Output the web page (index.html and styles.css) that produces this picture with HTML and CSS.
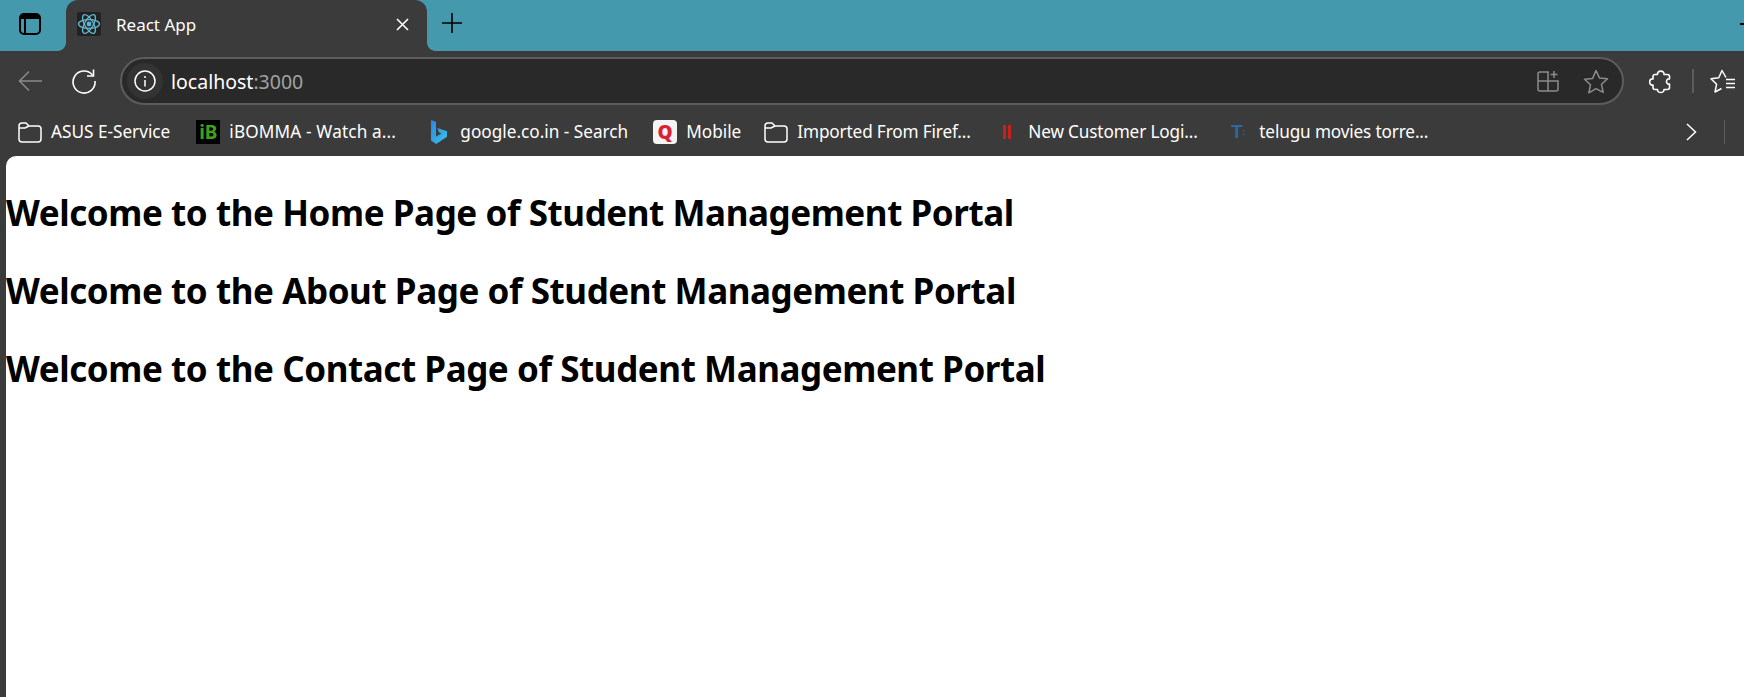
FILE: index.html
```html
<!DOCTYPE html>
<html lang="en">
<head>
  <meta charset="UTF-8">
  <title>React App</title>
  <link rel="stylesheet" href="styles.css">
</head>
<body>
  <div class="tabstrip">
    <div class="sidebar-btn">
      <svg width="22" height="22" viewBox="0 0 22 22" fill="none" stroke="#000" stroke-width="2"><rect x="1" y="1" width="20" height="20" rx="4"/><path d="M6 5v16"/><path d="M2 1.500h18V6H1z" fill="#000" stroke="none"/></svg>
    </div>
    <div class="tab">
      <span class="tab-icon">
        <svg width="24" height="24" viewBox="0 0 24 24" fill="none" stroke="#61b6cf" stroke-width="1.300"><circle cx="12" cy="12" r="2.400" fill="#61b6cf" stroke="none"/><ellipse cx="12" cy="12" rx="10.500" ry="4.300"/><ellipse cx="12" cy="12" rx="10.500" ry="4.300" transform="rotate(60 12 12)"/><ellipse cx="12" cy="12" rx="10.500" ry="4.300" transform="rotate(120 12 12)"/></svg>
      </span>
      <span class="tab-title">React App</span>
      <svg class="tab-close" width="13" height="13" viewBox="0 0 13 13" stroke="#fff" stroke-width="1.600"><path d="M1 1l11 11M12 1L1 12"/></svg>
    </div>
    <svg class="new-tab" width="20" height="20" viewBox="0 0 20 20" stroke="#000" stroke-width="1.600"><path d="M10 0v20M0 10h20"/></svg>
    <span class="minimize"></span>
  </div>

  <div class="toolbar">
    <svg class="back" width="24" height="22" viewBox="0 0 24 22" fill="none" stroke="#8a8a8a" stroke-width="1.500"><path d="M24 11H1.500M11 1.500L1.500 11l9.500 9.500"/></svg>
    <svg class="reload" width="26" height="26" viewBox="0 0 26 26" fill="none" stroke="#fff" stroke-width="1.600"><path d="M21.500 7A11 11 0 1 0 24 13"/><path d="M22.500 1.500V8H16"/></svg>
    <div class="addressbar">
      <span class="site-info">
        <svg width="22" height="22" viewBox="0 0 22 22" fill="none" stroke="#fff" stroke-width="1.500"><circle cx="11" cy="11" r="10"/><path d="M11 10v6.500M11 6v2"/></svg>
      </span>
      <span class="url">localhost<span class="url-port">:3000</span></span>
      <svg class="split-icon" width="22" height="22" viewBox="0 0 22 22" fill="none" stroke="#8c8c8c" stroke-width="1.500"><path d="M12 2H3a2 2 0 0 0-2 2v15a2 2 0 0 0 2 2h16a2 2 0 0 0 2-2v-8H1M11 2v19"/><path d="M17 1v7M13.500 4.500h7"/></svg>
      <svg class="star-icon" width="26" height="25" viewBox="0 0 26 25" fill="none" stroke="#8c8c8c" stroke-width="1.500" stroke-linejoin="round"><path d="M13 1.500l3.400 7.400 8.100.9-6 5.500 1.700 8L13 19.700l-7.200 4.100 1.700-8-6-5.500 8.100-.9z"/></svg>
    </div>
    <svg class="puzzle" width="24" height="25" viewBox="0 0 24 25" fill="none" stroke="#fff" stroke-width="1.600" stroke-linejoin="round"><path d="M8.500 5.500C8 1 15.500 1 15 5.500h3.500a2 2 0 0 1 2 2V10c-4-1-4 6 0 5v3.500a2 2 0 0 1-2 2H15c.5 4-7 4-6.500 0H6a2 2 0 0 1-2-2V16c-4.500 1-4.500-7 0-6V7.500a2 2 0 0 1 2-2z"/></svg>
    <span class="toolbar-sep"></span>
    <svg class="favorites" width="26" height="25" viewBox="0 0 26 25" fill="none" stroke="#fff" stroke-width="1.500" stroke-linejoin="round"><path d="M16 8.500L12 1.500 8.800 8.800 1 9.800l5.600 5.400L5 23l6.500-3.500"/><path d="M16 10.500h9M16 14.500h9M16 18.500h9"/></svg>
  </div>

  <div class="bookmarks">
    <a class="bookmark">
      <span class="bm-icon">
        <svg width="24" height="22" viewBox="0 0 24 22" fill="none" stroke="#fff" stroke-width="1.500"><path d="M1 5a3 3 0 0 1 3-3h4l3 3h9a3 3 0 0 1 3 3v10a3 3 0 0 1-3 3H4a3 3 0 0 1-3-3z"/><path d="M1 7h6l4-2"/></svg>
      </span>
      <span>ASUS E-Service</span>
    </a>
    <a class="bookmark bookmark-clip">
      <span class="bm-icon bm-ib">iB</span>
      <span class="bm-label-wide">iBOMMA - Watch a...</span>
    </a>
    <a class="bookmark bookmark-google">
      <span class="bm-icon">
        <svg width="16" height="24" viewBox="0 0 16 24"><defs><linearGradient id="bing" x1="0" y1="0" x2="1" y2="1"><stop offset="0" stop-color="#2a86e8"/><stop offset="1" stop-color="#3ac4e6"/></linearGradient></defs><path fill="url(#bing)" d="M0 0l5 1.800v14.700l5.500-3-2.600-1.300L6.300 8 16 11.300v5.500L5.200 24 0 20.500z"/></svg>
      </span>
      <span>google.co.in - Search</span>
    </a>
    <a class="bookmark bookmark-mobile">
      <span class="bm-icon bm-q">Q</span>
      <span>Mobile</span>
    </a>
    <a class="bookmark bookmark-clip">
      <span class="bm-icon">
        <svg width="24" height="22" viewBox="0 0 24 22" fill="none" stroke="#fff" stroke-width="1.500"><path d="M1 5a3 3 0 0 1 3-3h4l3 3h9a3 3 0 0 1 3 3v10a3 3 0 0 1-3 3H4a3 3 0 0 1-3-3z"/><path d="M1 7h6l4-2"/></svg>
      </span>
      <span class="bm-label-tight">Imported From Firef...</span>
    </a>
    <a class="bookmark bookmark-clip">
      <span class="bm-icon">
        <svg width="8" height="14" viewBox="0 0 8 14" fill="#c9201c"><rect width="3" height="14"/><rect x="5" width="3" height="14"/></svg>
      </span>
      <span class="bm-label-tight">New Customer Logi...</span>
    </a>
    <a class="bookmark bookmark-clip">
      <span class="bm-icon bm-t">T<small>:</small></span>
      <span class="bm-label-tight">telugu movies torre...</span>
    </a>
    <svg class="bm-more" width="11" height="18" viewBox="0 0 11 18" fill="none" stroke="#fff" stroke-width="1.500"><path d="M1 1l8.500 8L1 17"/></svg>
    <span class="bm-sep"></span>
  </div>

  <main class="page">
    <h1>Welcome to the Home Page of Student Management Portal</h1>
    <h1>Welcome to the About Page of Student Management Portal</h1>
    <h1>Welcome to the Contact Page of Student Management Portal</h1>
  </main>
</body>
</html>
```

FILE: styles.css
```css
html, body {
  margin: 0;
  height: 100%;
  overflow: hidden;
  background: #3b3b3b;
  font-family: "Noto Sans", sans-serif;
}
body {
  display: flex;
  flex-direction: column;
}
svg {
  display: block;
  flex: none;
}

/* tab strip */
.tabstrip {
  display: flex;
  align-items: center;
  height: 51px;
  background: #4599ad;
}
.sidebar-btn {
  width: 66px;
  padding: 0 0 3px 19px;
  box-sizing: border-box;
}
.tab {
  position: relative;
  display: flex;
  align-items: center;
  align-self: stretch;
  width: 361px;
  box-sizing: border-box;
  padding: 0 18px 3px 11px;
  background: #3b3b3b;
  border-radius: 12px 12px 0 0;
}
.tab::before, .tab::after {
  content: "";
  position: absolute;
  bottom: 0;
  width: 8px;
  height: 8px;
}
.tab::before {
  left: -8px;
  background: radial-gradient(circle at 0 0, transparent 7.500px, #3b3b3b 8px);
}
.tab::after {
  right: -8px;
  background: radial-gradient(circle at 100% 0, transparent 7.500px, #3b3b3b 8px);
}
.tab-icon {
  width: 24px;
  height: 24px;
  background: #222;
  border-radius: 2px;
}
.tab-title {
  flex: 1;
  margin-left: 15px;
  color: #fff;
  font-size: 17px;
}
.new-tab {
  margin: 0 0 5px 15px;
}
.minimize {
  width: 4px;
  height: 2px;
  margin: 0 0 3px auto;
  background: #000;
}

/* toolbar */
.toolbar {
  display: flex;
  align-items: center;
  height: 60px;
  padding-left: 18px;
}
.reload {
  margin-left: 29px;
}
.addressbar {
  display: flex;
  align-items: center;
  width: 1504px;
  height: 48px;
  box-sizing: border-box;
  margin-left: 23px;
  padding: 0 13px 0 5px;
  background: #292929;
  border: 2px solid #5c5c5c;
  border-radius: 24px;
}
.site-info {
  display: flex;
  align-items: center;
  justify-content: center;
  width: 36px;
  height: 36px;
  background: #333;
  border-radius: 50%;
}
.url {
  flex: 1;
  margin-left: 8px;
  padding-top: 1px;
  color: #fff;
  font-size: 19.500px;
}
.url-port {
  color: #a3a3a3;
}
.star-icon {
  margin-left: 24px;
}
.puzzle {
  margin-left: 25px;
}
.toolbar-sep {
  width: 2px;
  height: 24px;
  margin: 0 16px 0 19px;
  background: #5c5c5c;
}

/* bookmarks */
.bookmarks {
  display: flex;
  align-items: center;
  height: 45px;
  box-sizing: border-box;
  padding: 0 0 4px 18px;
  color: #fff;
  font-size: 17.200px;
}
.bookmark {
  display: flex;
  align-items: center;
  gap: 9px;
  margin-right: 26px;
  white-space: nowrap;
}
.bookmark-clip {
  width: 205px;
}
.bookmark-google {
  margin-right: 25px;
}
.bookmark-mobile {
  margin-right: 23px;
}
.bm-label-wide {
  letter-spacing: 0.150px;
}
.bm-label-tight {
  letter-spacing: -0.150px;
}
.bm-icon {
  display: flex;
  align-items: center;
  justify-content: center;
  width: 24px;
  height: 24px;
}
.bm-ib {
  background: #000;
  color: #3fa01c;
  font-size: 19px;
  font-weight: 700;
}
.bm-q {
  background: #f4f4f4;
  border-radius: 4px;
  color: #dc1f35;
  font-size: 19px;
  font-weight: 900;
}
.bm-t {
  color: #2f66a5;
  font-family: "Liberation Sans", sans-serif;
  font-size: 19px;
  font-weight: 700;
}
.bm-t small {
  font-size: 9px;
}
.bm-more {
  margin-left: auto;
}
.bm-sep {
  width: 1px;
  height: 24px;
  margin: 0 19px 0 27px;
  background: #5c5c5c;
}

/* page content */
.page {
  flex: 1;
  margin-left: 6px;
  padding-top: 3px;
  background: #fff;
  border-top-left-radius: 10px;
  color: #000;
  overflow: hidden;
}
.page h1 {
  margin: 30px 0;
  font-size: 35px;
  letter-spacing: -0.430px;
  line-height: 48px;
  white-space: nowrap;
}
```
